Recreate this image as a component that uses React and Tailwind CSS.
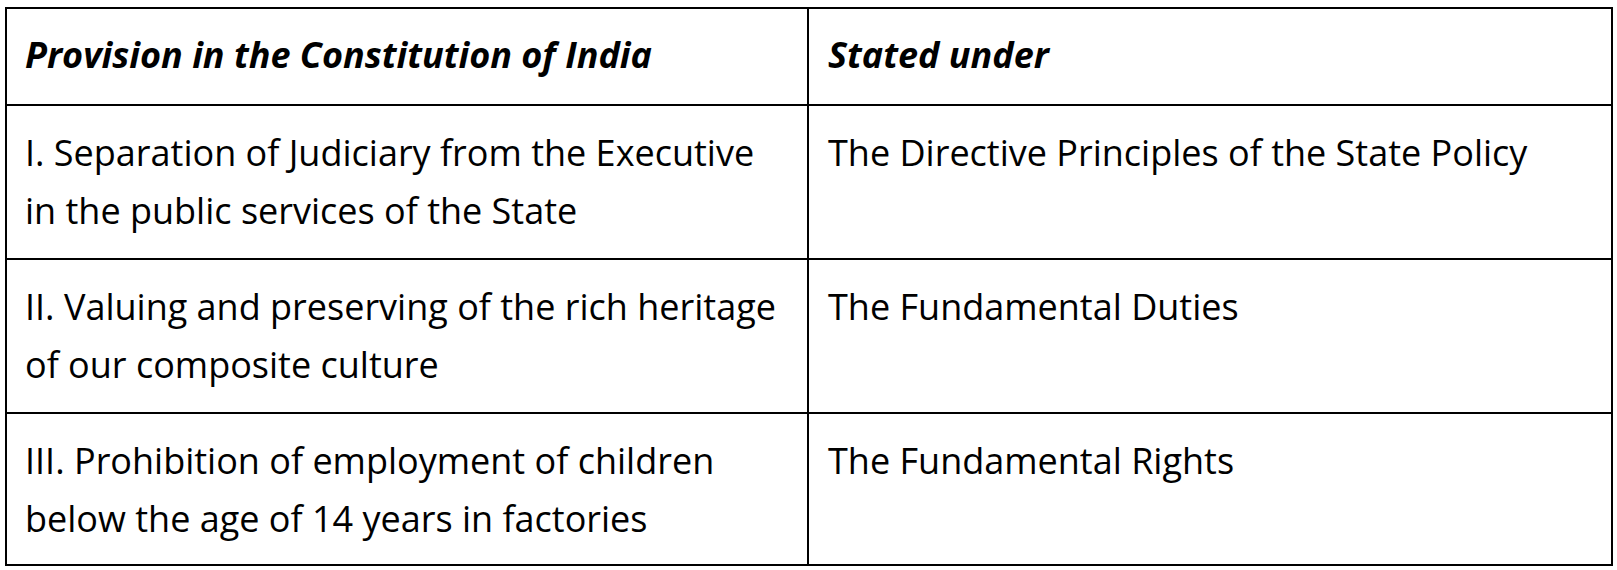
export default function App() {
  const rows = [
    [['I. Separation of Judiciary from the Executive', 'in the public services of the State'], 'The Directive Principles of the State Policy'],
    [['II. Valuing and preserving of the rich heritage', 'of our composite culture'], 'The Fundamental Duties'],
    [['III. Prohibition of employment of children', 'below the age of 14 years in factories'], 'The Fundamental Rights'],
  ];

  return (
    <div className="w-[1617px] h-[570px] bg-white pt-[7px] pl-[5px] font-['Open_Sans',sans-serif] text-[36px] text-black">
      <div className="w-[1608px] h-[559px] border-2 border-black grid grid-cols-[802px_1fr] grid-rows-[97px_154px_154px_1fr]">
        {/* header */}
        <div className="border-r-2 border-b-2 border-black pl-[18px] pt-[17px] leading-[58px] font-bold italic whitespace-nowrap">
          Provision in the Constitution of India
        </div>
        <div className="border-b-2 border-black pl-[19px] pt-[17px] leading-[58px] font-bold italic">
          Stated under
        </div>

        {rows.map((r, i) => (
          <>
            <div
              key={'a' + i}
              className={`border-r-2 border-black pl-[18px] pt-[18px] leading-[58px] whitespace-nowrap ${i < 2 ? 'border-b-2' : ''}`}
            >
              <div>{r[0][0]}</div>
              <div>{r[0][1]}</div>
            </div>
            <div
              key={'b' + i}
              className={`border-black pl-[19px] pt-[18px] leading-[58px] ${i < 2 ? 'border-b-2' : ''}`}
            >
              {r[1]}
            </div>
          </>
        ))}
      </div>
    </div>
  );
}
